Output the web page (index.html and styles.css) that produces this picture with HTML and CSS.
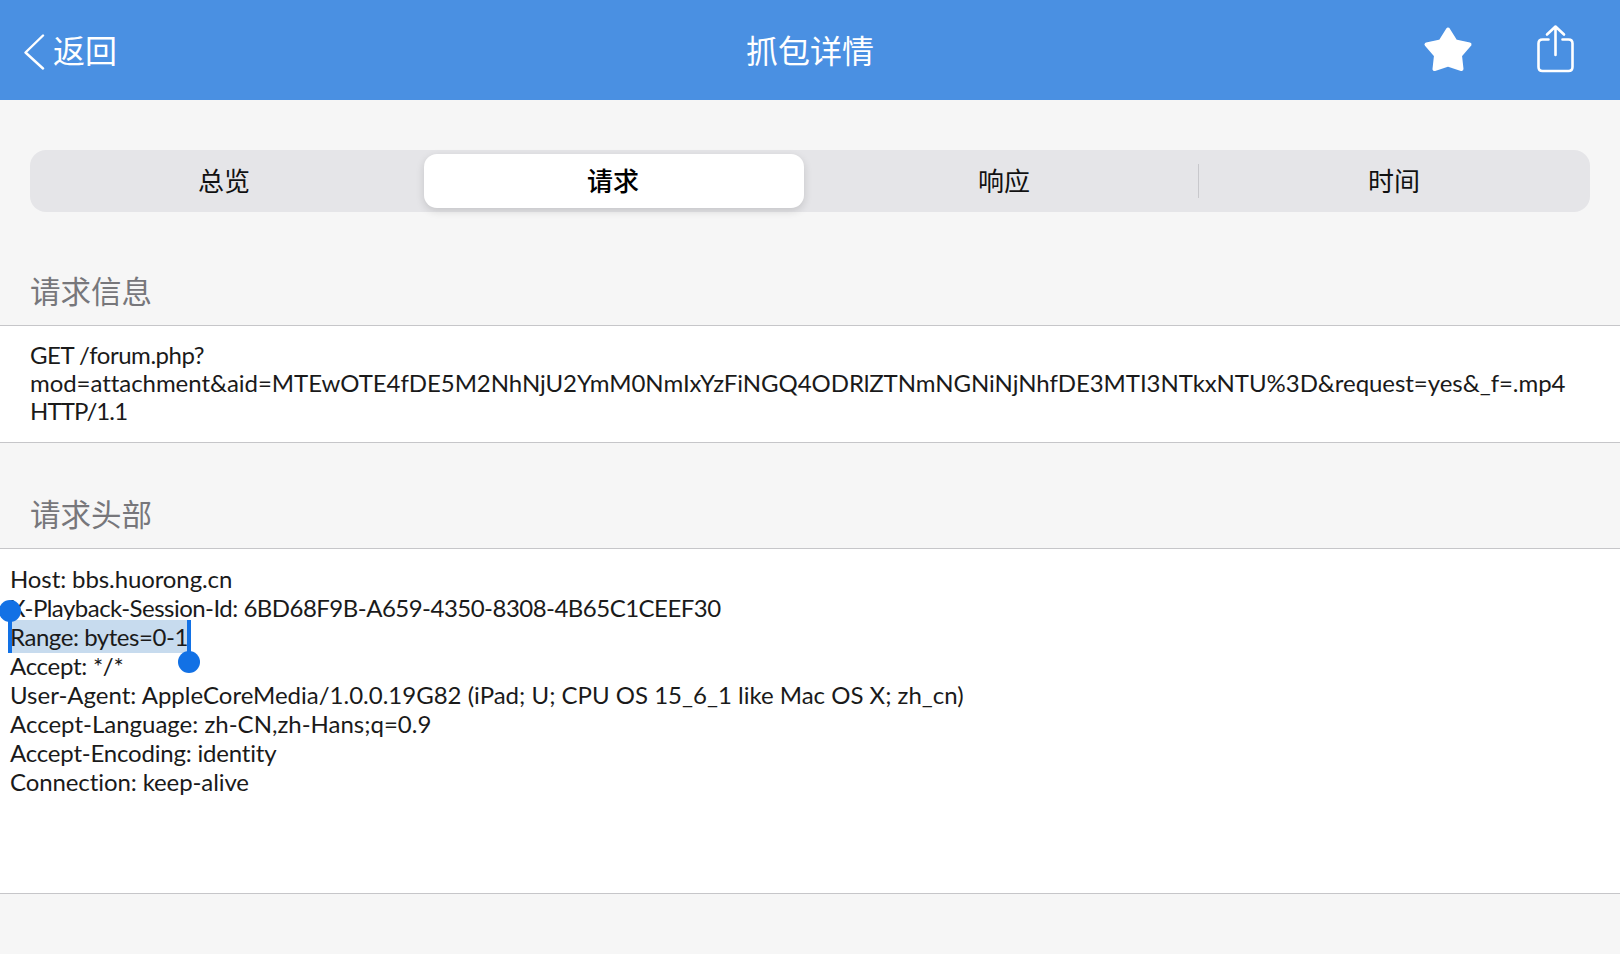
FILE: index.html
```html
<!DOCTYPE html>
<html lang="zh">
<head>
<meta charset="utf-8">
<title>抓包详情</title>
<link rel="stylesheet" href="styles.css">
</head>
<body>
<header class="nav">
  <div class="nav-left">
    <svg class="back-icon" width="22" height="36" viewBox="0 0 22 36"><path d="M20 1.5 L2.5 18.5 L20 34.5" fill="none" stroke="#fff" stroke-width="2.4" stroke-linecap="round" stroke-linejoin="round"/></svg>
    <span class="back-text">返回</span>
  </div>
  <div class="nav-title">抓包详情</div>
  <div class="nav-right">
    <svg class="star-icon" width="50" height="48" viewBox="0 0 50 48"><path d="M25 3.500 L32.500 15.500 L46.500 18.500 L37 29.500 L38.500 43 L25 38.500 L11.500 43 L13 29.500 L3.500 18.500 L17.500 15.500 Z" fill="#fff" stroke="#fff" stroke-width="4" stroke-linejoin="round"/></svg>
    <svg class="share-icon" width="40" height="50" viewBox="0 0 40 50"><path d="M12.500 15.500 H6.500 Q2.500 15.500 2.500 19.500 V43 Q2.500 47 6.500 47 H32.500 Q36.500 47 36.500 43 V19.500 Q36.500 15.500 32.500 15.500 H26.500 M19.500 31 V2.500 M11 10.500 L19.500 2.500 L28 10.500" fill="none" stroke="#fff" stroke-width="2.600" stroke-linecap="round" stroke-linejoin="round"/></svg>
  </div>
</header>
<main class="content">
  <div class="segments">
    <div class="seg">总览</div>
    <div class="seg seg-active">请求</div>
    <div class="seg">响应</div>
    <div class="seg seg-split">时间</div>
  </div>
  <h2 class="sec-title sec-first">请求信息</h2>
  <section class="panel panel-info">
    <p class="info-text"><span class="ls-get">GET /forum.php?</span><br><span class="ls-url">mod=attachment&amp;aid=MTEwOTE4fDE5M2NhNjU2YmM0NmIxYzFiNGQ4ODRlZTNmNGNiNjNhfDE3MTI3NTkxNTU%3D&amp;request=yes&amp;_f=.mp4</span><br><span class="ls-http">HTTP/1.1</span></p>
  </section>
  <h2 class="sec-title sec-second">请求头部</h2>
  <section class="panel panel-head">
    <div class="head-text">
      <div class="line ls-host">Host: bbs.huorong.cn</div>
      <div class="line ls-session">X-Playback-Session-Id: 6BD68F9B-A659-4350-8308-4B65C1CEEF30</div>
      <div class="line ls-range"><span class="selection">Range: bytes=0-1<i class="handle handle-start"></i><i class="handle handle-end"></i></span></div>
      <div class="line ls-accept">Accept: */*</div>
      <div class="line">User-Agent: AppleCoreMedia/1.0.0.19G82 (iPad; U; CPU OS 15_6_1 like Mac OS X; zh_cn)</div>
      <div class="line">Accept-Language: zh-CN,zh-Hans;q=0.9</div>
      <div class="line ls-enc">Accept-Encoding: identity</div>
      <div class="line ls-host">Connection: keep-alive</div>
    </div>
  </section>
</main>
</body>
</html>
```
FILE: styles.css
```css
* { box-sizing: border-box; }
html, body { margin: 0; height: 100%; }
body {
  background: #f6f6f6;
  color: #1a1a1a;
  font-family: "Lato", "Noto Sans CJK SC", sans-serif;
  overflow: hidden;
}
.nav {
  height: 100px;
  background: #4a90e2;
  display: flex;
  align-items: center;
  justify-content: space-between;
  position: relative;
  padding: 0 44px 0 23px;
  color: #fff;
}
.nav-left { display: flex; align-items: center; gap: 8px; }
.back-icon { margin-top: 3px; }
.back-text { font: 400 32px "Noto Sans CJK SC", sans-serif; margin-bottom: 3px; }
.nav-title {
  position: absolute;
  left: 0;
  right: 0;
  text-align: center;
  font: 400 32px "Noto Sans CJK SC", sans-serif;
  padding-bottom: 3px;
}
.nav-right { display: flex; align-items: center; gap: 63px; }
.star-icon { margin-bottom: 1px; }
.share-icon { margin-bottom: 2px; }
.segments {
  margin: 50px 30px 0;
  height: 62px;
  background: #e5e5e8;
  border-radius: 16px;
  display: grid;
  grid-template-columns: repeat(4, 1fr);
  padding: 4px 0;
}
.seg {
  display: flex;
  align-items: center;
  justify-content: center;
  font: 400 26px "Noto Sans CJK SC", sans-serif;
  color: #111;
  border-radius: 13px;
  position: relative;
  padding: 0 2px 4px 0;
}
.seg-active {
  background: #fff;
  font-weight: 500;
  color: #000;
  margin: 0 6px 0 4px;
  box-shadow: 0 3px 8px rgba(0, 0, 0, .14);
}
.seg-split::before {
  content: "";
  position: absolute;
  left: -2px;
  top: 10px;
  bottom: 10px;
  border-left: 1px solid #c8c8cc;
}
.sec-title {
  margin: 0;
  padding-left: 30px;
  font: 400 30.5px/42px "Noto Sans CJK SC", sans-serif;
  color: #77777b;
}
.sec-first { margin-top: 57px; margin-bottom: 14px; }
.sec-second { margin-top: 49px; margin-bottom: 14px; }
.panel {
  background: #fff;
  border-top: 1px solid #c6c6c9;
  border-bottom: 1px solid #c6c6c9;
}
.panel-info { height: 118px; padding: 15px 30px 0; }
.info-text {
  margin: 0;
  font-size: 24px;
  line-height: 28px;
}
.panel-head { height: 346px; padding: 15px 10px 0; }
.head-text { font-size: 24px; line-height: 29px; }
.line { white-space: nowrap; height: 29px; }
.ls-get { letter-spacing: -.47px; }
.ls-url { letter-spacing: -.056px; }
.ls-http { letter-spacing: -.9px; }
.ls-host { letter-spacing: -.1px; }
.ls-session { letter-spacing: -.52px; }
.ls-range { letter-spacing: -.45px; }
.ls-accept { letter-spacing: -.28px; }
.ls-enc { letter-spacing: -.2px; }
.selection {
  display: inline-block;
  position: relative;
  vertical-align: top;
  background: #c7dbee;
  height: 33px;
  padding: 2px 1px 0 2px;
  margin: -2px 0 0 -2px;
}
.handle { position: absolute; display: block; width: 4px; background: #1271e5; }
.handle::after {
  content: "";
  position: absolute;
  left: -9px;
  width: 22px;
  height: 22px;
  border-radius: 50%;
  background: #1271e5;
}
.handle-start { left: 0; top: 0; bottom: 0; }
.handle-start::after { top: -20px; }
.handle-end { right: -2px; top: 0; bottom: 0; }
.handle-end::after { bottom: -20px; }
```
